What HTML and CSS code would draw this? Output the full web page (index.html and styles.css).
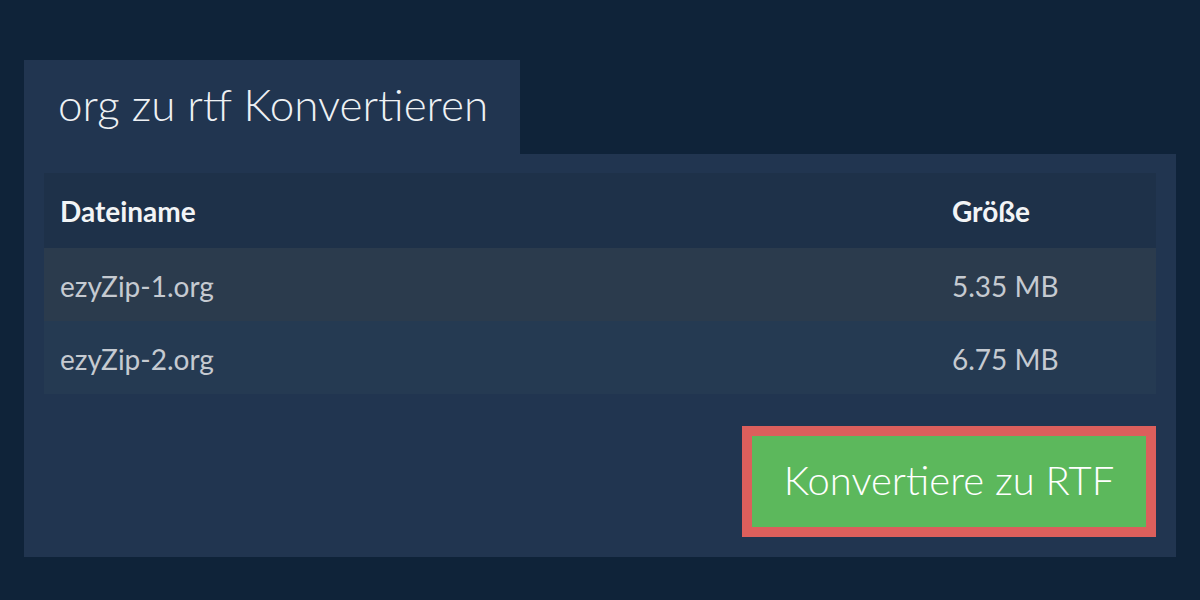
FILE: index.html
```html
<!DOCTYPE html>
<html lang="de">
<head>
<meta charset="utf-8">
<title>org zu rtf Konvertieren</title>
<link rel="stylesheet" href="styles.css">
</head>
<body>
<div class="page">
  <div class="tab"><h1 class="title">org zu rtf Konvertieren</h1></div>
  <div class="panel">
    <table class="files">
      <thead>
        <tr><th class="name">Dateiname</th><th class="size">Größe</th></tr>
      </thead>
      <tbody>
        <tr class="odd"><td class="name">ezyZip-1.org</td><td class="size">5.35 MB</td></tr>
        <tr class="even"><td class="name">ezyZip-2.org</td><td class="size">6.75 MB</td></tr>
      </tbody>
    </table>
    <div class="actions">
      <button class="convert">Konvertiere zu RTF</button>
    </div>
  </div>
</div>
</body>
</html>
```

FILE: styles.css
```css
html, body {
  margin: 0;
  padding: 0;
  background: #0f2339;
  font-family: Lato, "Open Sans", sans-serif;
}
.page {
  padding: 60px 24px 0 24px;
}
.tab {
  width: 496px;
  height: 94px;
  background: #213550;
  box-sizing: border-box;
  padding-left: 34px;
  display: flex;
  align-items: center;
}
.title {
  margin: 0;
  font-weight: 300;
  font-size: 44px;
  color: #eef1f4;
  padding-bottom: 6px;
}
.panel {
  background: #213550;
  padding: 19px 20px 20px 20px;
}
.files {
  width: 100%;
  border-collapse: collapse;
}
.files th, .files td {
  text-align: left;
  padding: 0 0 0 16px;
}
.files th {
  height: 75px;
  font-weight: 700;
  font-size: 28px;
  color: #f2f4f6;
  background: #1e3149;
}
.files td {
  height: 71px;
  padding-top: 2px;
  font-size: 28px;
  color: #c5cad1;
}
.files .size {
  width: 204px;
}
.odd td { background: #2b3b4d; }
.even td { background: #253a52; }
.actions {
  display: flex;
  justify-content: flex-end;
  margin-top: 32px;
}
.convert {
  width: 414px;
  height: 111px;
  border: 10px solid #dc5f5c;
  background: #5cb85c;
  color: #ffffff;
  font-family: Lato, "Open Sans", sans-serif;
  font-weight: 300;
  font-size: 40px;
  padding: 0 0 4px 0;
  box-sizing: border-box;
  cursor: pointer;
}
```
